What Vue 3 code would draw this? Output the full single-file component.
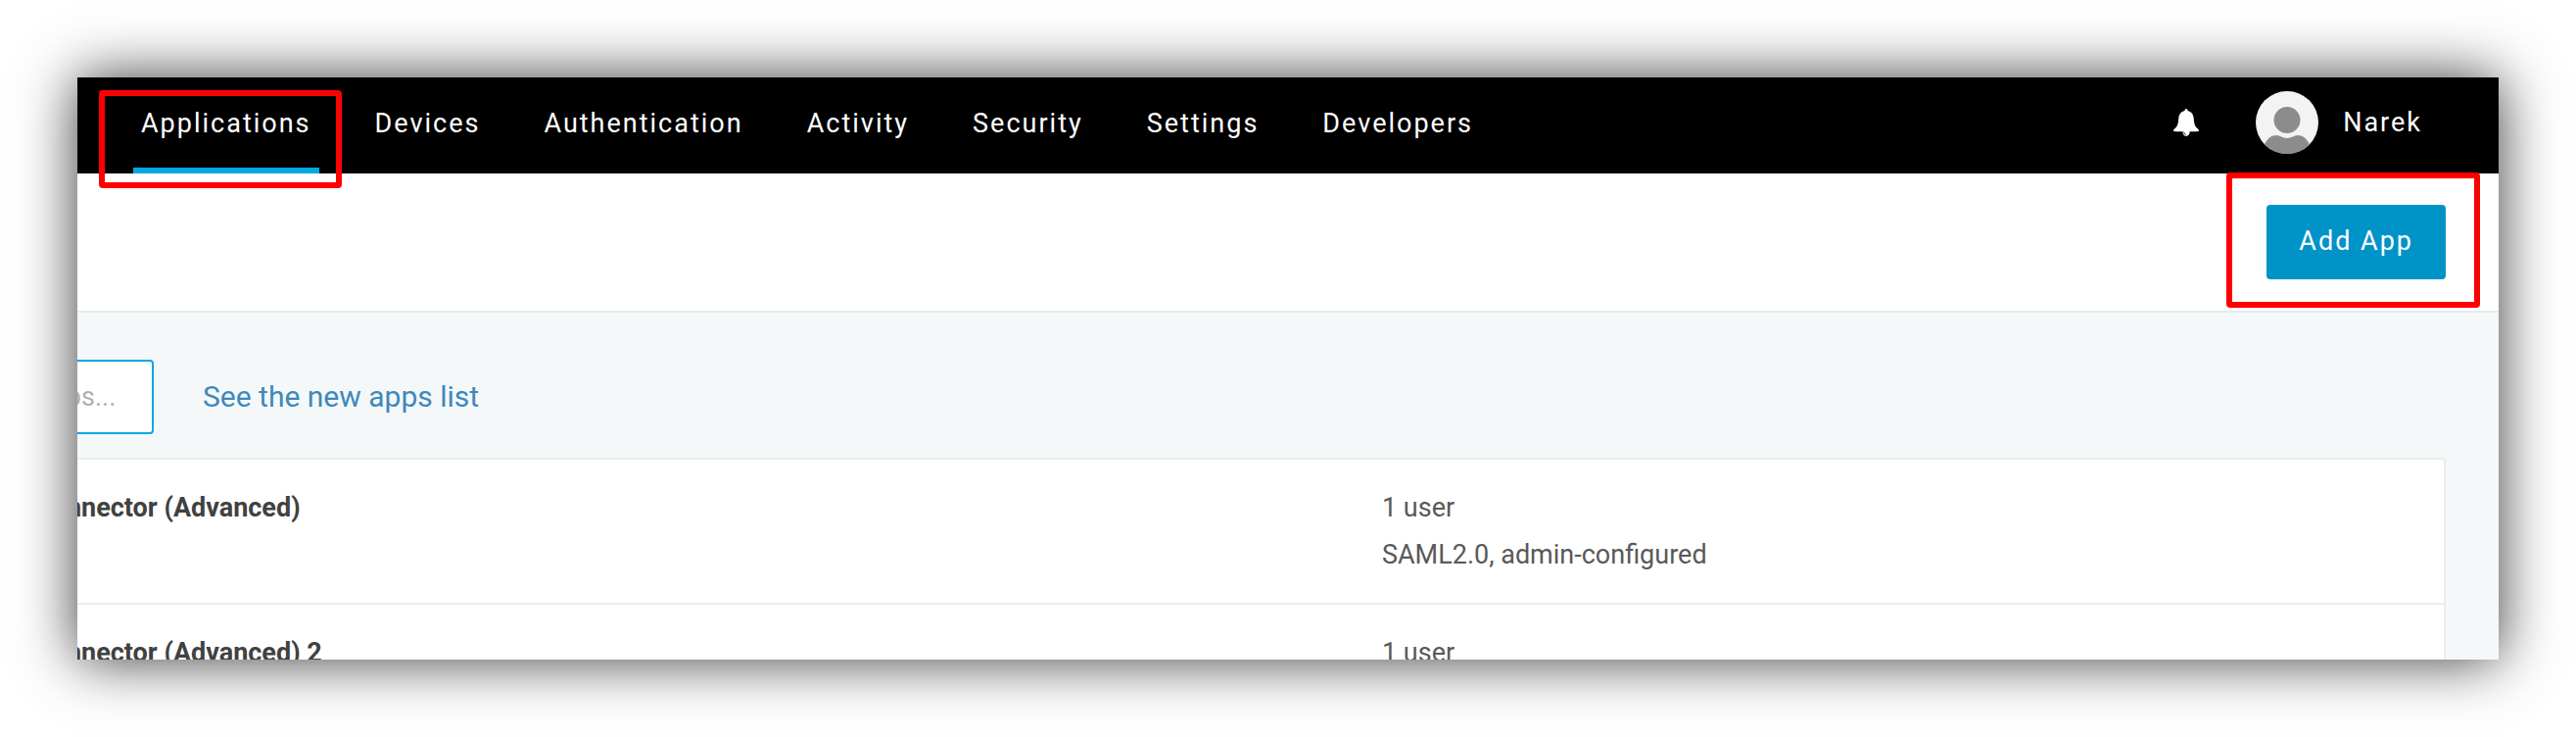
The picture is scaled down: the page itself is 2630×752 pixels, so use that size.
<script setup>
const navItems = [
  { label: 'Applications', active: true },
  { label: 'Devices' },
  { label: 'Authentication' },
  { label: 'Activity' },
  { label: 'Security' },
  { label: 'Settings' },
  { label: 'Developers' },
]

const apps = [
  { name: 'Connector (Advanced)', users: '1 user', detail: 'SAML2.0, admin-configured' },
  { name: 'Connector (Advanced) 2', users: '1 user', detail: 'SAML2.0, admin-configured' },
]
</script>

<template>
  <div class="page">
    <div class="window">
      <header class="topbar">
        <nav class="nav" aria-label="Main">
          <a
            v-for="item in navItems"
            :key="item.label"
            href="#"
            class="nav-link"
            :class="{ active: item.active }"
            :aria-current="item.active ? 'page' : undefined"
          >
            {{ item.label }}
            <span v-if="item.active" class="highlight highlight-nav"></span>
          </a>
        </nav>
        <div class="account">
          <button type="button" class="bell" aria-label="Notifications">
            <svg width="26" height="28" viewBox="0 0 26 28" aria-hidden="true">
              <path
                fill="#fff"
                d="M13 0c-1 0-1.500.8-1.500 2C7.600 2.800 5.600 5.800 5.300 9.500 5 14.500 4.300 18 1 20.600c-1 .9-1.500 1.700-.6 2.200.5.300 1.200.4 2 .4h7c.2 2.900 1.600 4.700 3.600 4.700s3.500-1.800 3.700-4.700h6.900c.8 0 1.500-.1 2-.4.9-.5.4-1.300-.6-2.200-3.300-2.600-4-6.100-4.300-11.100-.3-3.700-2.300-6.700-6.200-7.500 0-1.200-.5-2-1.500-2z"
              />
              <path d="M10.700 23.700c.2 1.500.9 2.400 2 2.800" fill="none" stroke="#000" stroke-width="1" />
            </svg>
          </button>
          <button type="button" class="profile">
            <svg width="64" height="64" viewBox="0 0 64 64" aria-hidden="true">
              <circle cx="32" cy="32" r="32" fill="#f3f3f3" />
              <circle cx="32" cy="29.500" r="13.500" fill="#8b8d8c" />
              <path
                fill="#8b8d8c"
                d="M9 54.300C12 48 16.500 45 21 45c4 0 6 3 11 3s7-3 11-3c4.500 0 9 3 12 9.300A32 32 0 0 1 9 54.300z"
              />
            </svg>
            <span>Narek</span>
          </button>
        </div>
      </header>

      <section class="actions">
        <div class="add-wrap">
          <button type="button" class="add-button">Add App</button>
          <span class="highlight highlight-add"></span>
        </div>
      </section>

      <main class="content">
        <div class="filters">
          <input class="search" type="text" placeholder="apps..." aria-label="Search apps" />
          <a href="#" class="list-link">See the new apps list</a>
        </div>
        <table class="apps" aria-label="Applications">
          <tbody>
            <tr v-for="app in apps" :key="app.name">
              <th scope="row" class="name">{{ app.name }}</th>
              <td class="info">
                <div>{{ app.users }}</div>
                <div>{{ app.detail }}</div>
              </td>
            </tr>
          </tbody>
        </table>
      </main>
    </div>
  </div>
</template>

<style>
body {
  margin: 0;
  background: #fff;
}
</style>

<style scoped>
.page {
  box-sizing: border-box;
  height: 100vh;
  padding: 79px;
  overflow: hidden;
  font-family: Roboto, "Liberation Sans", sans-serif;
}

.window {
  height: 100%;
  overflow: hidden;
  background: #fff;
  box-shadow: 0 0 56px rgba(0, 0, 0, 0.78);
}

.topbar {
  display: flex;
  justify-content: space-between;
  height: 98px;
  padding: 0 78px 0 57px;
  box-sizing: border-box;
  background: #000;
}

.nav {
  display: flex;
  gap: 49px;
}

.nav-link {
  position: relative;
  box-sizing: border-box;
  padding: 0 8px;
  border-bottom: 6px solid transparent;
  color: #fff;
  font-size: 27px;
  line-height: 94px;
  letter-spacing: 2px;
  text-decoration: none;
}

.nav-link.active {
  border-bottom-color: #00a9e0;
}

.highlight {
  position: absolute;
  box-sizing: border-box;
  border: 6px solid #f00;
  border-radius: 4px;
  pointer-events: none;
}

.highlight-nav {
  top: 13px;
  right: -23px;
  bottom: -21px;
  left: -35px;
}

.highlight-add {
  top: -33px;
  right: -35px;
  bottom: -29px;
  left: -41px;
}

.account {
  display: flex;
  align-items: center;
  gap: 58px;
  height: 92px;
}

button {
  padding: 0;
  border: 0;
  background: none;
  color: #fff;
  font-family: inherit;
  font-size: 27px;
  letter-spacing: 2px;
}

.bell svg,
.profile svg {
  display: block;
}

.profile {
  display: flex;
  align-items: center;
  gap: 25px;
}

.actions {
  display: flex;
  justify-content: flex-end;
  padding: 32px 54px 32px 0;
  border-bottom: 2px solid #e7eaeb;
}

.add-wrap {
  position: relative;
}

.add-button {
  display: block;
  height: 76px;
  padding: 0 33px 2px;
  border-radius: 4px;
  background: #0093c7;
}

.content {
  margin-left: -50px;
  padding: 48px 54px 0 0;
  background: #f4f8f9;
}

.filters {
  display: flex;
  align-items: center;
  gap: 50px;
  padding-bottom: 24px;
}

.search {
  box-sizing: border-box;
  width: 128px;
  height: 76px;
  padding: 0 0 0 7px;
  border: 2px solid #00a9e0;
  border-radius: 4px;
  background: #fff;
  color: #414141;
  font-family: inherit;
  font-size: 27px;
}

.search::placeholder {
  color: #b0b0b0;
  opacity: 1;
}

.list-link {
  padding-bottom: 2px;
  color: #3f88bb;
  font-size: 30px;
  text-decoration: none;
}

.apps {
  width: 100%;
  border: 2px solid #e9eeee;
  border-collapse: collapse;
  background: #fff;
}

.apps tr + tr {
  border-top: 2px solid #e9eeee;
}

.name,
.info {
  padding: 25px 0;
  font-size: 27px;
  line-height: 48px;
  text-align: left;
  vertical-align: top;
}

.name {
  box-sizing: border-box;
  width: 56%;
  padding-left: 4px;
  color: #414141;
  font-weight: 700;
}

.info {
  color: #595959;
}
</style>
